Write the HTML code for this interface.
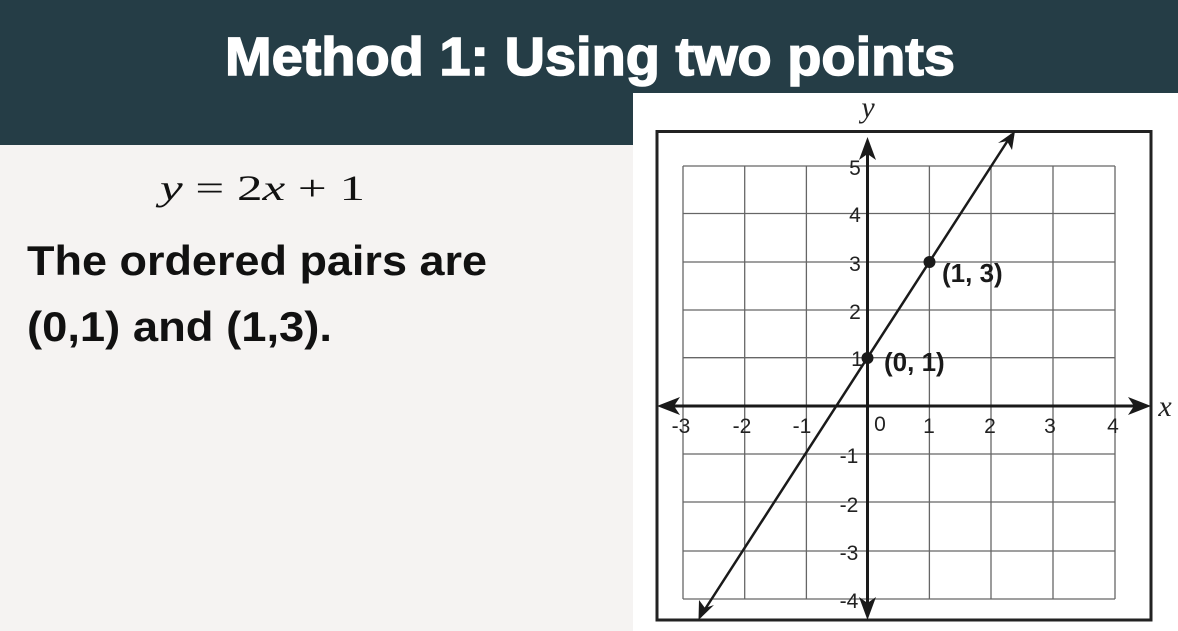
<!DOCTYPE html>
<html><head><meta charset="utf-8"><style>
html,body{margin:0;padding:0;}
body{width:1178px;height:631px;overflow:hidden;background:#f5f3f2;}
svg{display:block;}
</style></head><body>
<svg width="1178" height="631" viewBox="0 0 1178 631" xmlns="http://www.w3.org/2000/svg" font-family="Liberation Sans, sans-serif">
<rect x="0" y="0" width="1178" height="631" fill="#f5f3f2"/>
<rect x="0" y="0" width="1178" height="145" fill="#253d46"/>
<rect x="633" y="93" width="545" height="538" fill="#ffffff"/>
<text x="225" y="75" font-size="54" font-weight="bold" fill="#ffffff" stroke="#ffffff" stroke-width="1.5" textLength="730" lengthAdjust="spacingAndGlyphs">Method 1: Using two points</text>
<text x="160" y="200" font-family="Liberation Serif, serif" font-size="36" fill="#111" textLength="205" lengthAdjust="spacingAndGlyphs"><tspan font-style="italic">y</tspan> = 2<tspan font-style="italic">x</tspan> + 1</text>
<text x="27" y="275" font-size="42" font-weight="bold" fill="#111" textLength="460" lengthAdjust="spacingAndGlyphs">The ordered pairs are</text>
<text x="27" y="341" font-size="42" font-weight="bold" fill="#111" textLength="305" lengthAdjust="spacingAndGlyphs">(0,1) and (1,3).</text>
<!-- graph -->
<rect x="657" y="131.5" width="494" height="488.5" fill="none" stroke="#222" stroke-width="3"/>
<g stroke="#666" stroke-width="1.3">
<line x1="683" y1="166" x2="683" y2="599"/><line x1="744.7" y1="166" x2="744.7" y2="599"/>
<line x1="806.4" y1="166" x2="806.4" y2="599"/><line x1="929.4" y1="166" x2="929.4" y2="599"/>
<line x1="991" y1="166" x2="991" y2="599"/><line x1="1053" y1="166" x2="1053" y2="599"/>
<line x1="1115" y1="166" x2="1115" y2="599"/>
<line x1="683" y1="166" x2="1115" y2="166"/><line x1="683" y1="213.5" x2="1115" y2="213.5"/>
<line x1="683" y1="262" x2="1115" y2="262"/><line x1="683" y1="310" x2="1115" y2="310"/>
<line x1="683" y1="357.7" x2="1115" y2="357.7"/><line x1="683" y1="454" x2="1115" y2="454"/>
<line x1="683" y1="502" x2="1115" y2="502"/><line x1="683" y1="551" x2="1115" y2="551"/>
<line x1="683" y1="599" x2="1115" y2="599"/>
</g>
<g stroke="#1a1a1a" stroke-width="3">
<line x1="672" y1="406" x2="1135" y2="406"/>
<line x1="867.5" y1="150" x2="867.5" y2="605"/>
</g>
<g fill="#1a1a1a">
<polygon points="657,406 680,397 674,406 680,415"/>
<polygon points="1151,406 1128,397 1134,406 1128,415"/>
<polygon points="867.5,137 859,160 867.5,154 876,160"/>
<polygon points="867.5,620 859,597 867.5,603 876,597"/>
</g>
<line x1="700" y1="617" x2="1012" y2="134" stroke="#1a1a1a" stroke-width="2.5"/>
<polygon points="698.5,620 699,600 705,608 714,605" fill="#1a1a1a"/>
<polygon points="1015,131 1012,150 1007,141 998,143" fill="#1a1a1a"/>
<circle cx="867.5" cy="358" r="6" fill="#1a1a1a"/>
<circle cx="929.5" cy="262" r="6" fill="#1a1a1a"/>
<text x="942" y="282" font-size="26" font-weight="bold" fill="#1a1a1a">(1, 3)</text>
<text x="884" y="371" font-size="26" font-weight="bold" fill="#1a1a1a">(0, 1)</text>
<g font-size="21" fill="#222" text-anchor="middle">
<text x="855" y="175">5</text><text x="855" y="222">4</text><text x="855" y="271">3</text>
<text x="855" y="319">2</text><text x="857" y="366">1</text>
<text x="849" y="463">-1</text><text x="849" y="512">-2</text><text x="849" y="560">-3</text><text x="849" y="608">-4</text>
<text x="681" y="433">-3</text><text x="742" y="433">-2</text><text x="802" y="433">-1</text>
<text x="880" y="431">0</text><text x="929" y="433">1</text><text x="990" y="433">2</text>
<text x="1050" y="433">3</text><text x="1113" y="433">4</text>
</g>
<text x="868" y="117" font-family="Liberation Serif, serif" font-style="italic" font-size="30" fill="#222" text-anchor="middle">y</text>
<text x="1165" y="416" font-family="Liberation Serif, serif" font-style="italic" font-size="30" fill="#222" text-anchor="middle">x</text>
</svg>
</body></html>
